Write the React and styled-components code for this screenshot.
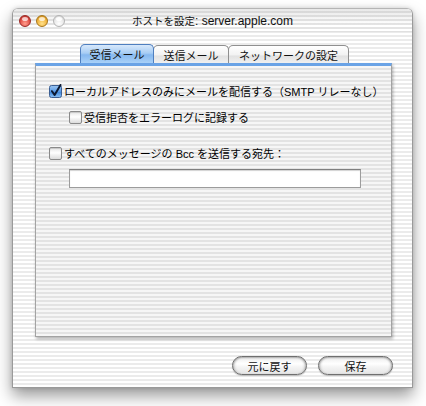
import React from 'react';
import styled, { createGlobalStyle } from 'styled-components';

const Global = createGlobalStyle`
  html, body {
    margin: 0;
    padding: 0;
    background: #fff;
  }
  body {
    width: 426px;
    height: 406px;
    overflow: hidden;
    font-family: "Liberation Sans", "Noto Sans CJK JP", sans-serif;
  }
`;

const stripes = (a, b) => `repeating-linear-gradient(to bottom, ${a} 0px, ${a} 2px, ${b} 2px, ${b} 4px)`;

const Window = styled.div`
  margin: 8px 0 0 12px;
  width: 399px;
  height: 378px;
  border: 1px solid #9a9a9a;
  border-top-color: #b5b5b5;
  border-radius: 6px 6px 0 0;
  background: ${stripes('#ffffff', '#ebebeb')};
  box-shadow: 0 8px 16px rgba(0, 0, 0, 0.4), 0 0 4px rgba(0, 0, 0, 0.15);
  display: flex;
  flex-direction: column;
  overflow: hidden;
`;

const TitleBar = styled.div`
  height: 22px;
  display: grid;
  grid-template-columns: 1fr auto 1fr;
  align-items: center;
  background:
    linear-gradient(to bottom, rgba(190, 190, 190, 0.35), rgba(255, 255, 255, 0) 75%),
    ${stripes('#ffffff', '#e4e4e4')};
  border-bottom: 1px solid #e0e0e0;
`;

const Lights = styled.div`
  display: flex;
  gap: 5px;
  padding-left: 6px;
  padding-top: 1px;
`;

const Light = styled.span`
  width: 12px;
  height: 12px;
  border-radius: 50%;
  box-sizing: border-box;
  border: 1px solid ${p => p.$edge};
  background: radial-gradient(circle at 50% 75%, ${p => p.$glow} 0%, ${p => p.$base} 60%, ${p => p.$dark} 100%);
  position: relative;
  &::after {
    content: '';
    position: absolute;
    left: 2px;
    top: 1px;
    width: 6px;
    height: 4px;
    border-radius: 50%;
    background: rgba(255, 255, 255, ${p => p.$shine});
  }
`;

const Title = styled.div`
  font-size: 12px;
  color: #111;
  white-space: nowrap;
  padding-top: 1px;
`;

const TitleJa = styled.span`
  font-size: 10.5px;
`;

const Body = styled.div`
  flex: 1;
  display: flex;
  flex-direction: column;
  padding: 12px 20px 0 22px;
`;

const TabRow = styled.div`
  display: flex;
  justify-content: center;
  height: 19px;
  padding-left: 2px;
`;

const Tab = styled.div`
  width: ${p => p.$w}px;
  box-sizing: border-box;
  height: ${p => (p.$active ? 19 : 18)}px;
  align-self: flex-end;
  display: flex;
  align-items: center;
  justify-content: center;
  font-size: 11px;
  color: #111;
  border: 1px solid ${p => (p.$active ? '#4f7fbf' : '#8f8f8f')};
  border-bottom: none;
  border-radius: 5px 5px 0 0;
  margin-left: ${p => (p.$first ? 0 : -1)}px;
  background: ${p =>
    p.$active
      ? 'linear-gradient(to bottom, #d8e9fb 0%, #a8cdf4 45%, #86b8ef 55%, #a9d1f8 100%)'
      : 'linear-gradient(to bottom, #ffffff 0%, #f3f3f3 50%, #e2e2e2 60%, #f0f0f0 100%)'};
  z-index: ${p => (p.$active ? 2 : 1)};
`;

const Panel = styled.div`
  height: 270px;
  border: 1px solid #a3a3a3;
  border-top: 3px solid #6aa3e6;
  background: ${stripes('#f6f6f6', '#e3e3e3')};
  box-shadow: 1px 2px 3px rgba(0, 0, 0, 0.3);
  display: flex;
  flex-direction: column;
  padding-left: 13px;
`;

const Row = styled.label`
  display: flex;
  align-items: center;
  gap: 2px;
  height: 14px;
  margin-top: ${p => p.$top}px;
  margin-left: ${p => p.$indent || 0}px;
  font-size: 11px;
  color: #000;
  white-space: nowrap;
`;

const Box = styled.span`
  width: 13px;
  height: 13px;
  flex: none;
  box-sizing: border-box;
  border: 1px solid #8a8a8a;
  border-radius: 2px;
  background: linear-gradient(to bottom, #e6e6e6 0%, #ffffff 45%, #f4f4f4 60%, #dcdcdc 100%);
  box-shadow: inset 0 1px 1px rgba(0, 0, 0, 0.15);
`;

const CheckedBox = styled.svg`
  width: 14px;
  height: 14px;
  flex: none;
  margin-right: -1px;
`;

const Field = styled.div`
  margin: 9px 0 0 20px;
  width: 292px;
  height: 19px;
  box-sizing: border-box;
  background: #fff;
  border: 1px solid #9c9c9c;
  border-top-color: #7f7f7f;
  box-shadow: inset 0 1px 1px rgba(0, 0, 0, 0.18);
`;

const Buttons = styled.div`
  display: flex;
  justify-content: flex-end;
  gap: 11px;
  margin-top: 19px;
  margin-right: -1px;
`;

const Button = styled.button`
  width: 75px;
  height: 19px;
  border-radius: 10px;
  border: 1px solid #6f6f6f;
  padding: 0;
  font-family: "Liberation Sans", "Noto Sans CJK JP", sans-serif;
  font-size: 11px;
  color: #111;
  background: linear-gradient(to bottom, #ececec 0%, #ffffff 40%, #f6f6f6 55%, #e4e4e4 100%);
  box-shadow: inset 0 1px 2px rgba(0, 0, 0, 0.28), inset 3px 0 3px -2px rgba(0, 0, 0, 0.2),
    inset -3px 0 3px -2px rgba(0, 0, 0, 0.2), 0 1px 1px rgba(0, 0, 0, 0.2);
`;

const Checked = () => (
  <CheckedBox viewBox="0 0 14 14">
    <defs>
      <linearGradient id="cbg" x1="0" y1="0" x2="0" y2="1">
        <stop offset="0" stopColor="#9cc6f2" />
        <stop offset="0.5" stopColor="#5a9be6" />
        <stop offset="0.55" stopColor="#3f86db" />
        <stop offset="1" stopColor="#8ec3f5" />
      </linearGradient>
    </defs>
    <rect x="0.5" y="1.5" width="12" height="12" rx="2" fill="url(#cbg)" stroke="#3c5f93" />
    <path d="M3 7.2 L5.6 11 L11.5 1" fill="none" stroke="#0d1a33" strokeWidth="2" strokeLinecap="round" strokeLinejoin="round" />
  </CheckedBox>
);

export default function App() {
  return (
    <>
      <Global />
      <Window>
        <TitleBar>
          <Lights>
            <Light $edge="#9b2a26" $base="#de4a42" $glow="#ff9d8c" $dark="#a52a24" $shine={0.7} />
            <Light $edge="#a8761a" $base="#f0b23a" $glow="#ffe08a" $dark="#b97a12" $shine={0.7} />
            <Light $edge="#b4b4b4" $base="#e6e6e6" $glow="#ffffff" $dark="#cfcfcf" $shine={0.9} />
          </Lights>
          <Title>
            <TitleJa>ホストを設定</TitleJa>: server.apple.com
          </Title>
          <div />
        </TitleBar>
        <Body>
          <TabRow>
            <Tab $w={74} $active $first>受信メール</Tab>
            <Tab $w={76}>送信メール</Tab>
            <Tab $w={121}>ネットワークの設定</Tab>
          </TabRow>
          <Panel>
            <Row $top={18}>
              <Checked />
              ローカルアドレスのみにメールを配信する（SMTP リレーなし）
            </Row>
            <Row $top={12} $indent={20}>
              <Box />
              受信拒否をエラーログに記録する
            </Row>
            <Row $top={22}>
              <Box />
              すべてのメッセージの Bcc を送信する宛先：
            </Row>
            <Field />
          </Panel>
          <Buttons>
            <Button>元に戻す</Button>
            <Button>保存</Button>
          </Buttons>
        </Body>
      </Window>
    </>
  );
}
